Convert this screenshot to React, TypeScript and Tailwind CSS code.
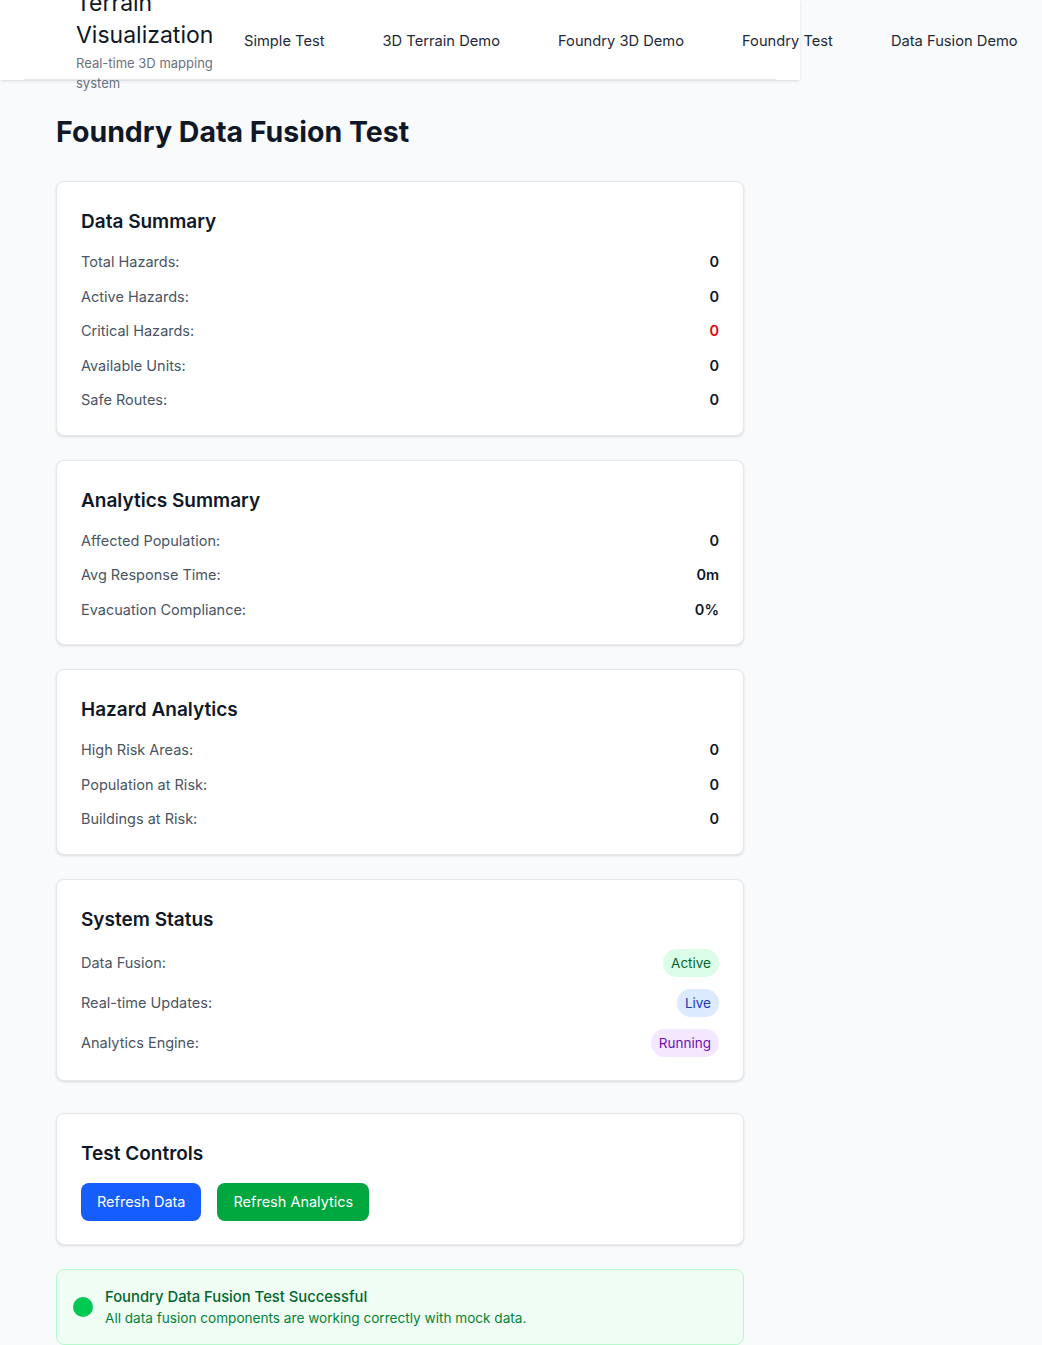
import React from "react";

type Row = { label: string; value: string; tone?: string };

function Card({ title, children }: { title: string; children: React.ReactNode })
{
    return (
        <div className="bg-white border border-gray-200 rounded-lg shadow-sm px-6 pt-[25px] pb-[23px]">
            <h2 className="text-[19px] leading-7 font-semibold text-gray-900 mt-[1px] mb-[15px]">{title}</h2>
            {children}
        </div>
    );
}

function Rows({ rows }: { rows: Row[] })
{
    return (
        <div className="space-y-3">
            {rows.map((r) => (
                <div key={r.label} className="flex justify-between items-center text-[14.5px] leading-[22.5px]">
                    <span className="text-gray-600">{r.label}</span>
                    <span className={"font-semibold " + (r.tone ?? "text-gray-900")}>{r.value}</span>
                </div>
            ))}
        </div>
    );
}

const nav = ["Simple Test", "3D Terrain Demo", "Foundry 3D Demo", "Foundry Test", "Data Fusion Demo"];

function App()
{
    return (
        <div className="min-h-[1345px] bg-gray-50 font-['Inter',sans-serif] text-gray-900">
            <header className="w-[800px] h-20 bg-white shadow-sm">
                <div className="h-20 mx-6 border-b border-gray-200 flex items-center pl-[52px]">
                    <div className="w-[140px] shrink-0">
                        <h1 className="text-[23px] leading-8 text-gray-900">Terrain Visualization</h1>
                        <p className="text-[13px] leading-5 text-gray-500 mt-[2px]">Real-time 3D mapping system</p>
                    </div>
                    <nav className="flex ml-7 pt-[3px] gap-[58px] whitespace-nowrap">
                        {nav.map((n) => (
                            <span key={n} className="text-[14.7px] text-gray-800">{n}</span>
                        ))}
                    </nav>
                </div>
            </header>

            <main className="w-[688px] ml-14 pt-[34px] pb-10">
                <h1 className="text-[28.5px] leading-9 font-bold text-gray-900 mb-[31px]">Foundry Data Fusion Test</h1>

                <div className="space-y-6">
                    <Card title="Data Summary">
                        <Rows rows={[
                            { label: "Total Hazards:", value: "0" },
                            { label: "Active Hazards:", value: "0" },
                            { label: "Critical Hazards:", value: "0", tone: "text-red-600" },
                            { label: "Available Units:", value: "0" },
                            { label: "Safe Routes:", value: "0" },
                        ]} />
                    </Card>

                    <Card title="Analytics Summary">
                        <Rows rows={[
                            { label: "Affected Population:", value: "0" },
                            { label: "Avg Response Time:", value: "0m" },
                            { label: "Evacuation Compliance:", value: "0%" },
                        ]} />
                    </Card>

                    <Card title="Hazard Analytics">
                        <Rows rows={[
                            { label: "High Risk Areas:", value: "0" },
                            { label: "Population at Risk:", value: "0" },
                            { label: "Buildings at Risk:", value: "0" },
                        ]} />
                    </Card>

                    <Card title="System Status">
                        <div className="space-y-3">
                            <div className="flex justify-between items-center text-[14.5px]">
                                <span className="text-gray-600">Data Fusion:</span>
                                <span className="px-2 py-1 rounded-full bg-green-100 text-green-800 text-[13.5px] leading-5">Active</span>
                            </div>
                            <div className="flex justify-between items-center text-[14.5px]">
                                <span className="text-gray-600">Real-time Updates:</span>
                                <span className="px-2 py-1 rounded-full bg-blue-100 text-blue-800 text-[13.5px] leading-5">Live</span>
                            </div>
                            <div className="flex justify-between items-center text-[14.5px]">
                                <span className="text-gray-600">Analytics Engine:</span>
                                <span className="px-2 py-1 rounded-full bg-purple-100 text-purple-800 text-[13.5px] leading-5">Running</span>
                            </div>
                        </div>
                    </Card>
                </div>

                <div className="mt-8">
                    <Card title="Test Controls">
                        <div className="flex gap-4">
                            <button className="px-4 py-2 rounded-lg bg-blue-600 text-white text-[14.5px] leading-[22px]">Refresh Data</button>
                            <button className="px-4 py-2 rounded-lg bg-green-600 text-white text-[14.5px] leading-[22px]">Refresh Analytics</button>
                        </div>
                    </Card>
                </div>

                <div className="mt-6 bg-green-50 border border-green-200 rounded-lg p-4 flex items-center gap-3">
                    <div className="w-5 h-5 rounded-full bg-green-500 shrink-0"></div>
                    <div>
                        <p className="text-[14.8px] font-medium text-green-800">Foundry Data Fusion Test Successful</p>
                        <p className="text-[13.6px] text-green-700">All data fusion components are working correctly with mock data.</p>
                    </div>
                </div>
            </main>
        </div>
    );
}

export default App;
